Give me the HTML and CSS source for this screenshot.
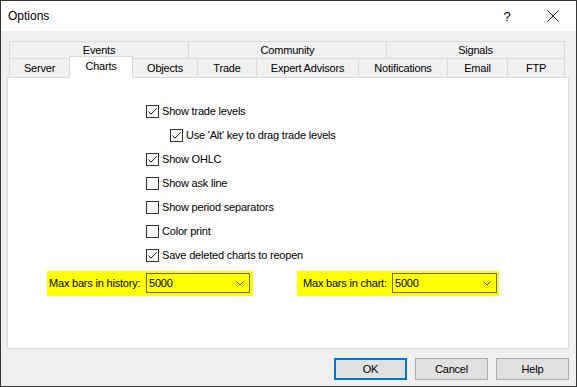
FILE: index.html
```html
<!DOCTYPE html>
<html lang="en">

<head>
	<meta charset="utf-8">
	<title>Options</title>
	<link rel="stylesheet" href="styles.css">
</head>

<body>
	<div class="window">
		<div class="titlebar">
			<span class="title">Options</span>
			<span class="caption-btn">?</span>
			<span class="caption-btn">
				<svg width="12" height="12" viewBox="0 0 12 12">
					<path d="M0.5 0.5 L11.5 11.5 M11.5 0.5 L0.5 11.5" stroke="#111" stroke-width="1" fill="none" />
				</svg>
			</span>
		</div>

		<div class="body">
			<div class="tabs">
				<div class="tab-row row-top">
					<div class="tab w-events">Events</div>
					<div class="tab w-community">Community</div>
					<div class="tab w-signals">Signals</div>
				</div>
				<div class="tab-row row-bottom">
					<div class="tab w-server">Server</div>
					<div class="tab w-charts active">Charts</div>
					<div class="tab w-objects">Objects</div>
					<div class="tab w-trade">Trade</div>
					<div class="tab w-experts">Expert Advisors</div>
					<div class="tab w-notif">Notifications</div>
					<div class="tab w-email">Email</div>
					<div class="tab w-ftp">FTP</div>
				</div>
			</div>

			<div class="panel">
				<div class="checks">
					<div class="check-row">
						<span class="box"><svg width="11" height="11" viewBox="0 0 11 11"><path d="M1.5 5.5 L4 8 L9.5 2.5" stroke="#222" fill="none" /></svg></span>
						Show trade levels
					</div>
					<div class="check-row indent">
						<span class="box"><svg width="11" height="11" viewBox="0 0 11 11"><path d="M1.5 5.5 L4 8 L9.5 2.5" stroke="#222" fill="none" /></svg></span>
						Use 'Alt' key to drag trade levels
					</div>
					<div class="check-row">
						<span class="box"><svg width="11" height="11" viewBox="0 0 11 11"><path d="M1.5 5.5 L4 8 L9.5 2.5" stroke="#222" fill="none" /></svg></span>
						Show OHLC
					</div>
					<div class="check-row">
						<span class="box"></span>
						Show ask line
					</div>
					<div class="check-row">
						<span class="box"></span>
						Show period separators
					</div>
					<div class="check-row">
						<span class="box"></span>
						Color print
					</div>
					<div class="check-row">
						<span class="box"><svg width="11" height="11" viewBox="0 0 11 11"><path d="M1.5 5.5 L4 8 L9.5 2.5" stroke="#222" fill="none" /></svg></span>
						Save deleted charts to reopen
					</div>
				</div>

				<div class="fields">
					<div class="field field-history">
						<span class="field-label">Max bars in history:</span>
						<div class="combo">
							<span>5000</span>
							<svg width="8" height="5" viewBox="0 0 8 5"><path d="M0.5 0.5 L4 4 L7.5 0.5" stroke="#444" fill="none" /></svg>
						</div>
					</div>
					<div class="field field-chart">
						<span class="field-label">Max bars in chart:</span>
						<div class="combo">
							<span>5000</span>
							<svg width="8" height="5" viewBox="0 0 8 5"><path d="M0.5 0.5 L4 4 L7.5 0.5" stroke="#444" fill="none" /></svg>
						</div>
					</div>
				</div>
			</div>

			<div class="buttons">
				<div class="btn default">OK</div>
				<div class="btn">Cancel</div>
				<div class="btn">Help</div>
			</div>
		</div>
	</div>
</body>

</html>
```

FILE: styles.css
```css
body {
	margin: 0;
	font-family: "Liberation Sans", Arial, sans-serif;
	font-size: 11px;
	letter-spacing: -0.2px;
	color: #000;
}

.window {
	width: 577px;
	height: 387px;
	box-sizing: border-box;
	border: 1px solid #363636;
	background: #f0f0f0;
	display: flex;
	flex-direction: column;
}

/* title bar */
.titlebar {
	height: 30px;
	background: #fff;
	display: flex;
	align-items: center;
	padding-left: 7px;
}

.title {
	font-size: 12px;
	letter-spacing: 0;
	flex: 1;
}

.caption-btn {
	width: 46px;
	height: 30px;
	display: flex;
	align-items: center;
	justify-content: center;
	font-size: 13px;
}

/* body */
.body {
	flex: 1;
	padding: 10px 7px 0 6px;
}

.tabs {
	margin-left: 2px;
}

.tab-row {
	display: flex;
}

.tab {
	box-sizing: border-box;
	border: 1px solid #d9d9d9;
	border-bottom: none;
	margin-left: -1px;
	text-align: center;
	background: #f0f0f0;
}

.tab:first-child {
	margin-left: 0;
}

.row-top .tab {
	height: 17px;
	line-height: 16px;
}

.row-bottom .tab {
	height: 19px;
	line-height: 19px;
}

.row-bottom .tab.active {
	background: #fff;
	height: 22px;
	margin-top: -2px;
	margin-bottom: -1px;
	line-height: 18px;
	position: relative;
	z-index: 1;
}

.w-events { width: 180px; }
.w-community { width: 199px; }
.w-signals { width: 179px; }
.w-server { width: 61px; }
.w-charts { width: 64px; }
.w-objects { width: 66px; }
.w-trade { width: 60px; }
.w-experts { width: 103px; }
.w-notif { width: 90px; }
.w-email { width: 61px; }
.w-ftp { width: 58px; }

/* panel */
.panel {
	height: 272px;
	box-sizing: border-box;
	border: 1px solid #d9d9d9;
	background: #fff;
	padding-top: 21px;
}

.checks {
	margin-left: 138px;
}

.check-row {
	height: 24px;
	display: flex;
	align-items: center;
	gap: 3px;
}

.check-row.indent {
	padding-left: 24px;
}

.box {
	width: 13px;
	height: 13px;
	box-sizing: border-box;
	border: 1px solid #333;
	background: #fff;
	display: flex;
}

.fields {
	display: flex;
	margin: 4px 0 0 39px;
	gap: 44px;
}

.field {
	display: flex;
	align-items: center;
	background: #ffff00;
	padding: 2px 3px 3px 2px;
}

.field-history .field-label { width: 97px; }
.field-history .combo { width: 104px; }

.field-chart {
	padding: 2px 2px 3px 6px;
}

.field-chart .field-label { width: 89px; }
.field-chart .combo { width: 105px; }

.combo {
	height: 20px;
	box-sizing: border-box;
	border: 1px solid #6a6a14;
	display: flex;
	align-items: center;
	justify-content: space-between;
	padding: 0 5px 0 2px;
}

/* buttons */
.buttons {
	display: flex;
	justify-content: flex-end;
	gap: 8px;
	margin-top: 9px;
}

.btn {
	width: 73px;
	height: 22px;
	box-sizing: border-box;
	border: 1px solid #adadad;
	background: #e1e1e1;
	display: flex;
	align-items: center;
	justify-content: center;
}

.btn.default {
	border: 2px solid #0078d7;
}
```
